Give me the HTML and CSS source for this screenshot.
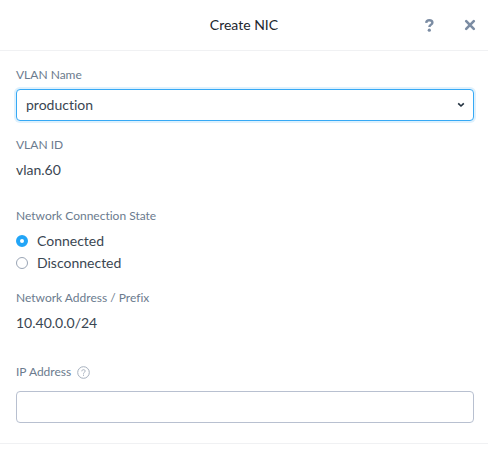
FILE: index.html
```html
<!DOCTYPE html>
<html lang="en">
<head>
<meta charset="utf-8">
<title>Create NIC</title>
<link rel="stylesheet" href="styles.css">
</head>
<body>
<form class="dialog">
  <header class="dialog-header">
    <h1 class="dialog-title">Create NIC</h1>
    <div class="dialog-actions">
      <button type="button" class="icon-button" aria-label="Help">
        <svg width="9" height="13" viewBox="0 0 9 13" fill="none" stroke="currentColor" stroke-width="2.4"><path d="M1.2 3.8C1.4 2.1 2.6 1.3 4.3 1.3c1.9 0 3.1 1 3.1 2.4 0 2-3 1.9-3 4.4"/><circle cx="4.3" cy="11.2" r="1.6" fill="currentColor" stroke="none"/></svg>
      </button>
      <button type="button" class="icon-button" aria-label="Close">
        <svg width="12" height="12" viewBox="0 0 12 12" fill="none" stroke="currentColor" stroke-width="2.6" stroke-linecap="round"><path d="M2.2 2.2l7.6 7.6M9.8 2.2L2.2 9.8"/></svg>
      </button>
    </div>
  </header>
  <main class="dialog-body">
    <div class="field">
      <label class="label" for="vlan">VLAN Name</label>
      <div class="select-wrap">
        <select class="control select" id="vlan"><option>production</option></select>
        <svg class="chevron" width="8" height="6" viewBox="0 0 8 6" fill="none" stroke="currentColor" stroke-width="1.6"><path d="M1.2 1.3L4 4l2.8-2.7"/></svg>
      </div>
    </div>
    <div class="field field-read">
      <span class="label">VLAN ID</span>
      <span class="value">vlan.60</span>
    </div>
    <fieldset class="field field-choices">
      <legend class="label">Network Connection State</legend>
      <label class="choice"><input class="radio" type="radio" name="state" checked>Connected</label>
      <label class="choice"><input class="radio" type="radio" name="state">Disconnected</label>
    </fieldset>
    <div class="field field-read">
      <span class="label">Network Address / Prefix</span>
      <span class="value">10.40.0.0/24</span>
    </div>
    <div class="field field-ip">
      <label class="label label-hint" for="ip">IP Address
        <svg width="13" height="13" viewBox="0 0 13 13" fill="none" stroke="currentColor"><circle cx="6.5" cy="6.5" r="5.8"/><path d="M4.8 5.3c0-1 .7-1.6 1.7-1.6s1.7.6 1.7 1.4c0 1.2-1.7 1.1-1.7 2.6M6.5 8.6v1.2"/></svg>
      </label>
      <input class="control" id="ip" type="text">
    </div>
  </main>
</form>
</body>
</html>
```

FILE: styles.css
```css
* { box-sizing: border-box; }

body {
  margin: 0;
  background: #fff;
  color: #3a4652;
  font: 14px/20px Lato, "Liberation Sans", sans-serif;
  font-variant-ligatures: none;
}

.dialog-header {
  display: grid;
  grid-template-columns: 1fr auto 1fr;
  align-items: center;
  height: 51px;
  padding: 0 12px;
  border-bottom: 1px solid #f0f1f3;
}

.dialog-title {
  grid-column: 2;
  margin: 0;
  color: #22272e;
  font-size: 14px;
  font-weight: 400;
}

.dialog-actions {
  display: flex;
  justify-content: flex-end;
  gap: 30px;
}

.icon-button {
  display: flex;
  align-items: center;
  padding: 0;
  border: 0;
  background: none;
  color: #7b8ca3;
}

.dialog-body {
  display: flex;
  flex-direction: column;
  gap: 16px;
  padding: 16px 14px 20px 16px;
  border-bottom: 1px solid #f0f1f3;
}

.field {
  display: flex;
  flex-direction: column;
  gap: 6px;
  min-width: 0;
  margin: 0;
  padding: 0;
  border: 0;
}

.field-read {
  gap: 7px;
  padding-bottom: 12px;
}

.field-choices { gap: 0; }

.field-ip {
  gap: 11px;
  padding-top: 3px;
}

.label {
  padding: 0;
  color: #6b7b8e;
  font-size: 12px;
  line-height: 16px;
}

legend.label { margin-bottom: 6px; }

.label-hint {
  display: flex;
  align-items: center;
  gap: 6px;
}

.label-hint svg { color: #a5afbd; }

.value { line-height: 20px; }

.control {
  display: block;
  width: 100%;
  height: 32px;
  padding: 0 9px;
  border: 1px solid #b8c0d0;
  border-radius: 4px;
  background: #fff;
  color: inherit;
  font: inherit;
  font-variant-ligatures: none;
}

.select-wrap {
  display: grid;
  align-items: center;
}

.select-wrap > * { grid-area: 1 / 1; }

.select {
  appearance: none;
  border-color: #36a9f5;
  box-shadow: 0 0 0 2px #dff1fd;
}

.chevron {
  justify-self: end;
  margin-right: 9px;
  color: #22313f;
  pointer-events: none;
}

.choice {
  display: flex;
  align-items: center;
  gap: 9px;
  line-height: 22px;
}

.radio {
  appearance: none;
  width: 12px;
  height: 12px;
  margin: 0;
  border: 1px solid #9aa5b5;
  border-radius: 50%;
}

.radio:checked { border: 4px solid #22a5f7; }
```
